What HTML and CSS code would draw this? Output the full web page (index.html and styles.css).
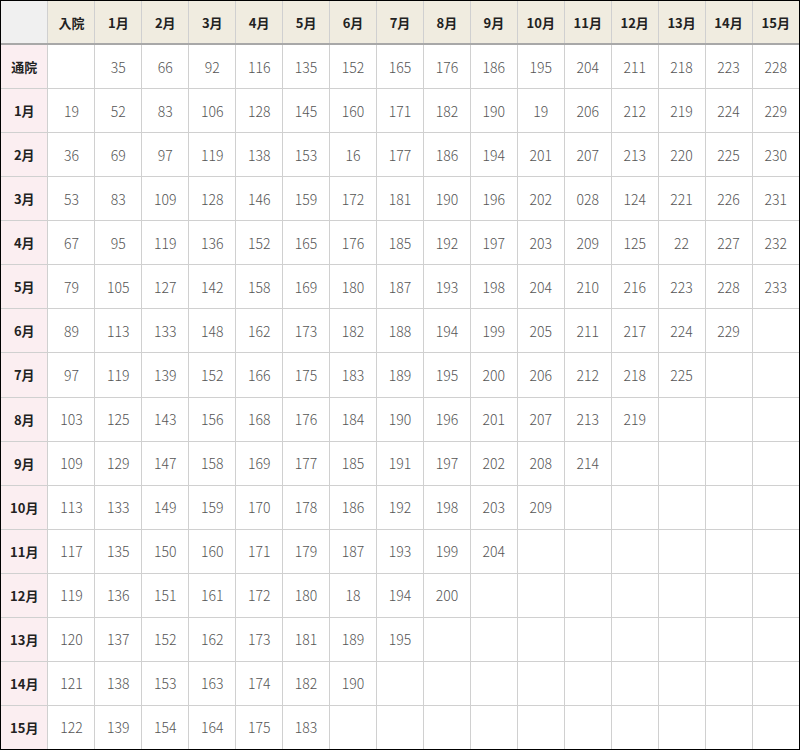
FILE: index.html
```html
<!DOCTYPE html>
<html lang="ja">
<head>
<meta charset="utf-8">
<link rel="stylesheet" href="styles.css">
</head>
<body>
<div class="frame">
<table class="grid">
<thead>
<tr class="head"><th class="corner"></th><th>入院</th><th>1月</th><th>2月</th><th>3月</th><th>4月</th><th>5月</th><th>6月</th><th>7月</th><th>8月</th><th>9月</th><th>10月</th><th>11月</th><th>12月</th><th>13月</th><th>14月</th><th>15月</th></tr>
</thead>
<tbody>
<tr><th>通院</th><td></td><td>35</td><td>66</td><td>92</td><td>116</td><td>135</td><td>152</td><td>165</td><td>176</td><td>186</td><td>195</td><td>204</td><td>211</td><td>218</td><td>223</td><td>228</td></tr>
<tr><th>1月</th><td>19</td><td>52</td><td>83</td><td>106</td><td>128</td><td>145</td><td>160</td><td>171</td><td>182</td><td>190</td><td>19</td><td>206</td><td>212</td><td>219</td><td>224</td><td>229</td></tr>
<tr><th>2月</th><td>36</td><td>69</td><td>97</td><td>119</td><td>138</td><td>153</td><td>16</td><td>177</td><td>186</td><td>194</td><td>201</td><td>207</td><td>213</td><td>220</td><td>225</td><td>230</td></tr>
<tr><th>3月</th><td>53</td><td>83</td><td>109</td><td>128</td><td>146</td><td>159</td><td>172</td><td>181</td><td>190</td><td>196</td><td>202</td><td>028</td><td>124</td><td>221</td><td>226</td><td>231</td></tr>
<tr><th>4月</th><td>67</td><td>95</td><td>119</td><td>136</td><td>152</td><td>165</td><td>176</td><td>185</td><td>192</td><td>197</td><td>203</td><td>209</td><td>125</td><td>22</td><td>227</td><td>232</td></tr>
<tr><th>5月</th><td>79</td><td>105</td><td>127</td><td>142</td><td>158</td><td>169</td><td>180</td><td>187</td><td>193</td><td>198</td><td>204</td><td>210</td><td>216</td><td>223</td><td>228</td><td>233</td></tr>
<tr><th>6月</th><td>89</td><td>113</td><td>133</td><td>148</td><td>162</td><td>173</td><td>182</td><td>188</td><td>194</td><td>199</td><td>205</td><td>211</td><td>217</td><td>224</td><td>229</td><td></td></tr>
<tr><th>7月</th><td>97</td><td>119</td><td>139</td><td>152</td><td>166</td><td>175</td><td>183</td><td>189</td><td>195</td><td>200</td><td>206</td><td>212</td><td>218</td><td>225</td><td></td><td></td></tr>
<tr><th>8月</th><td>103</td><td>125</td><td>143</td><td>156</td><td>168</td><td>176</td><td>184</td><td>190</td><td>196</td><td>201</td><td>207</td><td>213</td><td>219</td><td></td><td></td><td></td></tr>
<tr><th>9月</th><td>109</td><td>129</td><td>147</td><td>158</td><td>169</td><td>177</td><td>185</td><td>191</td><td>197</td><td>202</td><td>208</td><td>214</td><td></td><td></td><td></td><td></td></tr>
<tr><th>10月</th><td>113</td><td>133</td><td>149</td><td>159</td><td>170</td><td>178</td><td>186</td><td>192</td><td>198</td><td>203</td><td>209</td><td></td><td></td><td></td><td></td><td></td></tr>
<tr><th>11月</th><td>117</td><td>135</td><td>150</td><td>160</td><td>171</td><td>179</td><td>187</td><td>193</td><td>199</td><td>204</td><td></td><td></td><td></td><td></td><td></td><td></td></tr>
<tr><th>12月</th><td>119</td><td>136</td><td>151</td><td>161</td><td>172</td><td>180</td><td>18</td><td>194</td><td>200</td><td></td><td></td><td></td><td></td><td></td><td></td><td></td></tr>
<tr><th>13月</th><td>120</td><td>137</td><td>152</td><td>162</td><td>173</td><td>181</td><td>189</td><td>195</td><td></td><td></td><td></td><td></td><td></td><td></td><td></td><td></td></tr>
<tr><th>14月</th><td>121</td><td>138</td><td>153</td><td>163</td><td>174</td><td>182</td><td>190</td><td></td><td></td><td></td><td></td><td></td><td></td><td></td><td></td><td></td></tr>
<tr><th>15月</th><td>122</td><td>139</td><td>154</td><td>164</td><td>175</td><td>183</td><td></td><td></td><td></td><td></td><td></td><td></td><td></td><td></td><td></td><td></td></tr>
</tbody>
</table>
</div>
</body>
</html>
```
FILE: styles.css
```css
html, body {
  margin: 0;
  padding: 0;
  background: #fff;
}
.frame {
  width: 800px;
  height: 750px;
  box-sizing: border-box;
  border: 1px solid #000;
  overflow: hidden;
}
.grid {
  width: 798px;
  height: 748px;
  border-collapse: collapse;
  border-style: hidden;
  table-layout: fixed;
  font-family: "Noto Sans CJK JP", "Noto Sans", sans-serif;
}
.grid th, .grid td {
  border: 1px solid #d0d0d0;
  text-align: center;
  vertical-align: middle;
  padding: 0;
  height: 43px;
}
.grid td {
  font-size: 14px;
  font-weight: 300;
  color: #555;
}
.grid th {
  font-size: 13px;
  font-weight: 700;
  color: #222;
}
.grid tbody th {
  background: #fbeef1;
}
.grid .head th {
  background: #f0ece0;
  border-bottom: 2px solid #a8a8a8;
  height: 42px;
}
.grid .head th.corner {
  background: #f0f0f0;
}
```
